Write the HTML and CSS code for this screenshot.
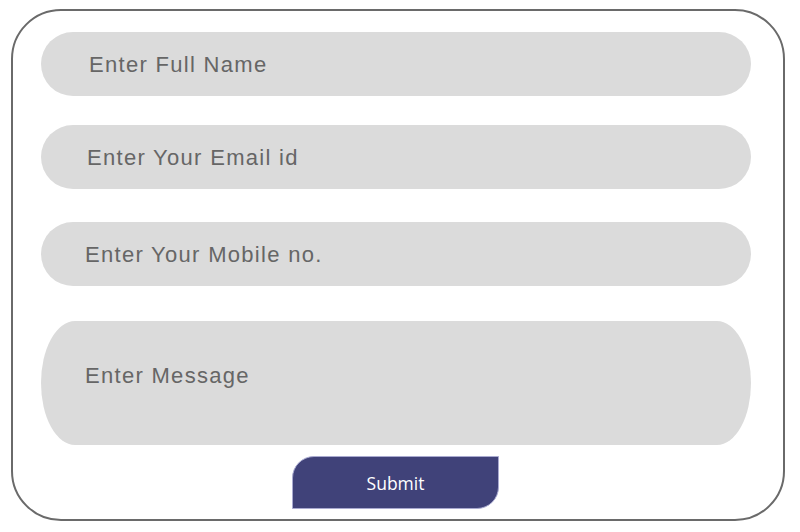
FILE: index.html
```html
<!DOCTYPE html>
<html>
<head>
<meta charset="utf-8">
<link rel="stylesheet" href="styles.css">
</head>
<body>
<form class="card">
  <input class="field f-name" type="text" placeholder="Enter Full Name">
  <input class="field f-email" type="text" placeholder="Enter Your Email id">
  <input class="field f-mobile" type="text" placeholder="Enter Your Mobile no.">
  <textarea class="field f-msg" placeholder="Enter Message"></textarea>
  <button class="submit" type="button">Submit</button>
</form>
</body>
</html>
```

FILE: styles.css
```css
html, body {
  margin: 0;
  padding: 0;
  background: #ffffff;
}
.card {
  box-sizing: border-box;
  width: 774px;
  height: 512px;
  margin: 9px 0 0 11px;
  border: 2px solid #6a6a6a;
  border-radius: 50px;
  padding: 21px 0 0 28px;
  display: flex;
  flex-direction: column;
  align-items: flex-start;
}
.field {
  box-sizing: border-box;
  display: block;
  width: 710px;
  height: 64px;
  margin: 0;
  border: none;
  outline: none;
  background: #dbdbdb;
  border-radius: 32px;
  font-family: "Liberation Sans", Arial, sans-serif;
  font-size: 22px;
  letter-spacing: 1.3px;
  color: #666666;
  line-height: 62px;
  padding: 2px 0 0 0;
  resize: none;
}
.field::placeholder {
  color: #666666;
  opacity: 1;
}
.f-name { padding-left: 48px; }
.f-email { margin-top: 29px; padding-left: 46px; }
.f-mobile { margin-top: 33px; padding-left: 44px; }
.f-msg {
  margin-top: 35px;
  height: 124px;
  border-radius: 34px / 62px;
  padding: 23px 0 0 44px;
  line-height: 64px;
  overflow: hidden;
}
.submit {
  margin: 11px 0 0 251px;
  width: 207px;
  height: 53px;
  border: 1px solid #a9aad0;
  background: #404279;
  border-radius: 22px 0 22px 0;
  color: #ffffff;
  font-family: "Open Sans", sans-serif;
  font-size: 17.5px;
  padding: 0;
}
```
